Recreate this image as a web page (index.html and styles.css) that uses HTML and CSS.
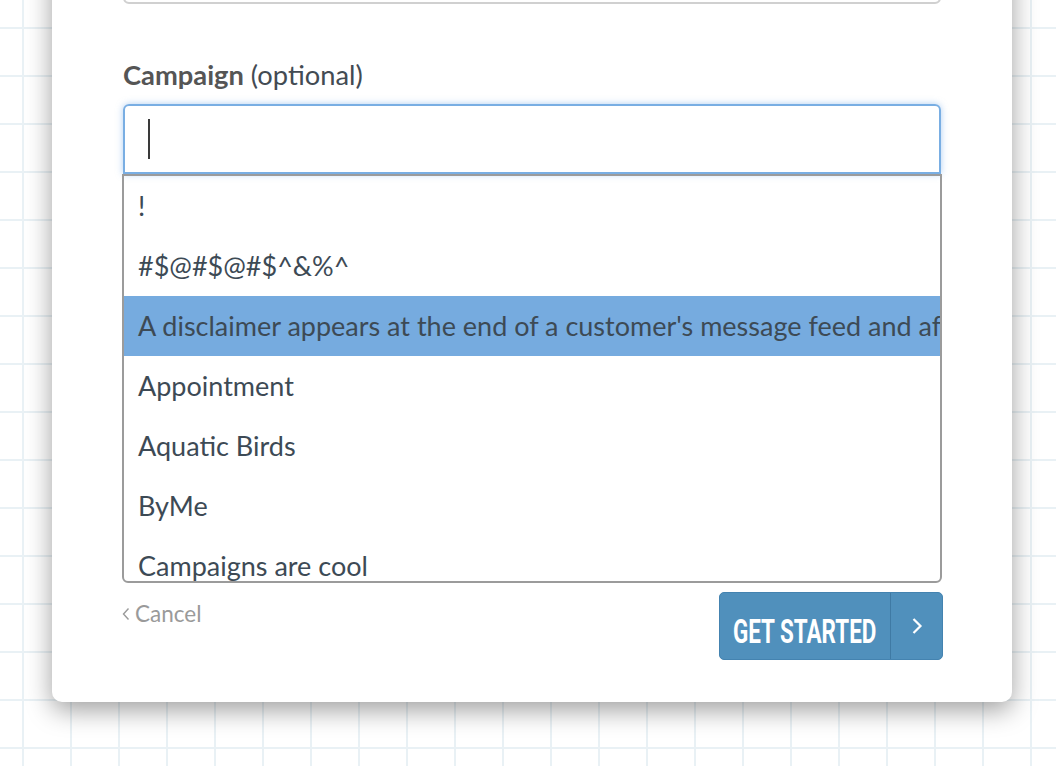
FILE: index.html
```html
<!DOCTYPE html>
<html>
<head>
<meta charset="utf-8">
<link rel="stylesheet" href="styles.css">
</head>
<body>
<div class="card">
  <div class="prev-input"></div>
  <label class="label"><b>Campaign</b> (optional)</label>
  <div class="combo">
    <div class="input"><span class="caret"></span></div>
    <ul class="list">
      <li>!</li>
      <li>#$@#$@#$^&amp;%^</li>
      <li class="active">A disclaimer appears at the end of a customer's message feed and after each reply</li>
      <li>Appointment</li>
      <li>Aquatic Birds</li>
      <li>ByMe</li>
      <li>Campaigns are cool</li>
      <li>Checkup</li>
    </ul>
  </div>
  <div class="actions">
    <a class="cancel"><svg class="chev-l" viewBox="0 0 8 14" width="8" height="14"><path d="M6.5 1.5 L1.5 7 L6.5 12.5" fill="none" stroke="#9a9a9a" stroke-width="1.4"/></svg>Cancel</a>
    <button class="btn"><span class="btn-text"><span class="btn-label">GET STARTED</span></span><span class="btn-arrow"><svg viewBox="0 0 12 20" width="12" height="20"><path d="M2.5 3 L9.5 10 L2.5 17" fill="none" stroke="#fff" stroke-width="2.2"/></svg></span></button>
  </div>
</div>
</body>
</html>
```

FILE: styles.css
```css
html, body {
  margin: 0;
  padding: 0;
}
body {
  width: 1056px;
  height: 766px;
  overflow: hidden;
  background-color: #ffffff;
  background-image:
    linear-gradient(to right, #e9f1f5 2px, transparent 2px),
    linear-gradient(to bottom, #e9f1f5 2px, transparent 2px);
  background-size: 48px 48px;
  background-position: 22px 0, 0 27px;
  font-family: "Lato", "Open Sans", sans-serif;
}
.card {
  margin: -60px 0 0 52px;
  width: 960px;
  box-sizing: border-box;
  padding: 12px 70px 42px 71px;
  background: #fff;
  border-radius: 10px;
  box-shadow: 0 8px 26px rgba(0, 0, 0, 0.38);
}
.prev-input {
  height: 52px;
  border: 2px solid #d0d0d0;
  border-radius: 6px;
  box-sizing: border-box;
  margin: 0 1px 0 0;
}
.label {
  display: block;
  margin-top: 56px;
  font-size: 27.3px;
  line-height: 30px;
  color: #434b53;
}
.label b {
  color: #555555;
  font-weight: 700;
}
.combo {
  margin-top: 14px;
}
.input {
  height: 70px;
  box-sizing: border-box;
  border: 2px solid #79aee3;
  border-radius: 6px 6px 0 0;
  box-shadow: 0 0 7px rgba(110, 165, 230, 0.55);
  margin-right: 1px;
  display: flex;
  align-items: center;
  padding-left: 23px;
}
.caret {
  width: 2px;
  height: 40px;
  background: #3a3a3a;
}
.list {
  list-style: none;
  margin: 0 0 0 -1px;
  padding: 0;
  height: 409px;
  box-sizing: border-box;
  border: 2px solid #9b9b9b;
  border-radius: 0 0 6px 6px;
  overflow: hidden;
}
.list li {
  height: 60px;
  line-height: 60px;
  padding-left: 14px;
  font-size: 27px;
  color: #3d4a55;
  white-space: nowrap;
  overflow: hidden;
}
.list li.active {
  background: #76abdf;
}
.actions {
  display: flex;
  justify-content: space-between;
  align-items: flex-start;
  margin-top: 9px;
  margin-left: -1px;
}
.cancel {
  display: flex;
  align-items: center;
  gap: 5px;
  font-size: 22.5px;
  color: #9a9a9a;
  margin-top: 9px;
  line-height: 26px;
}
.chev-l {
  display: block;
}
.btn {
  width: 224px;
  height: 68px;
  margin-right: -1px;
  padding: 0;
  border: 1px solid #4483b0;
  border-radius: 5px;
  background: #5090bc;
  display: flex;
  align-items: stretch;
  color: #fff;
  font-family: "Roboto", sans-serif;
}
.btn-text {
  width: 171px;
  display: flex;
  align-items: center;
  justify-content: center;
  border-right: 1px solid #3f7aa4;
  padding-top: 9px;
  box-sizing: border-box;
}
.btn-label {
  display: inline-block;
  font-size: 34px;
  font-weight: 700;
  transform: scaleX(0.66);
  white-space: nowrap;
  margin: 0 -36px;
}
.btn-arrow {
  flex: 1;
  display: flex;
  align-items: center;
  justify-content: center;
}
.btn-arrow svg {
  display: block;
}
```
